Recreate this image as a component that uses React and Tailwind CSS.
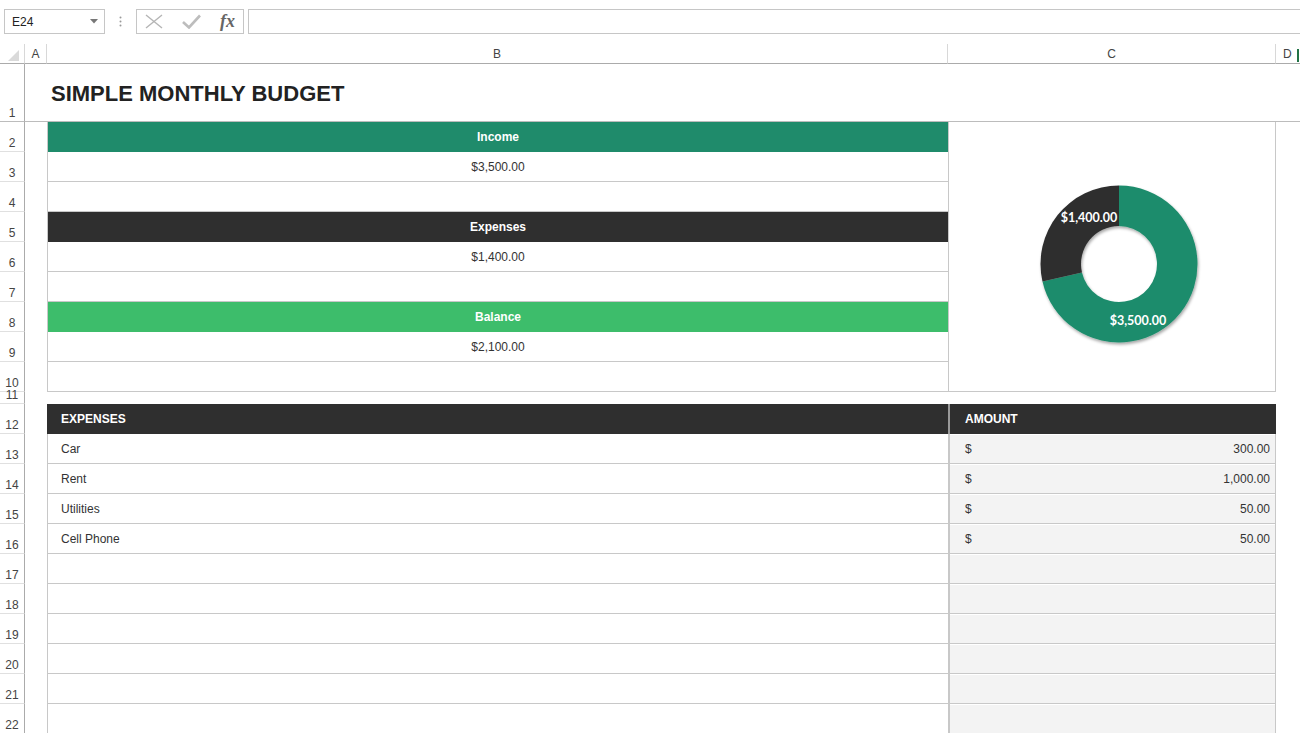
import React from "react";

const topRows = [
  { n: 2, text: "Income", cls: "bg-[#1f8b6b] text-white font-bold" },
  { n: 3, text: "$3,500.00", cls: "border-b border-[#c8c8c8] text-[#333]" },
  { n: 4, text: "", cls: "border-b border-[#c8c8c8]" },
  { n: 5, text: "Expenses", cls: "bg-[#2f2f2f] text-white font-bold" },
  { n: 6, text: "$1,400.00", cls: "border-b border-[#c8c8c8] text-[#333]" },
  { n: 7, text: "", cls: "border-b border-[#c8c8c8]" },
  { n: 8, text: "Balance", cls: "bg-[#3dbd6b] text-white font-bold" },
  { n: 9, text: "$2,100.00", cls: "border-b border-[#c8c8c8] text-[#333]" },
  { n: 10, text: "", cls: "border-b border-[#c8c8c8]" },
];

const expenses = [
  { n: 13, name: "Car", amount: "300.00" },
  { n: 14, name: "Rent", amount: "1,000.00" },
  { n: 15, name: "Utilities", amount: "50.00" },
  { n: 16, name: "Cell Phone", amount: "50.00" },
  { n: 17 },
  { n: 18 },
  { n: 19 },
  { n: 20 },
  { n: 21 },
  { n: 22 },
];

// angle in degrees, clockwise from 12 o'clock
const polar = (cx, cy, r, deg) => {
  const a = ((deg - 90) * Math.PI) / 180;
  return [cx + r * Math.cos(a), cy + r * Math.sin(a)];
};

const slice = (cx, cy, r0, r1, a0, a1) => {
  const large = a1 - a0 > 180 ? 1 : 0;
  const [x1, y1] = polar(cx, cy, r1, a0);
  const [x2, y2] = polar(cx, cy, r1, a1);
  const [x3, y3] = polar(cx, cy, r0, a1);
  const [x4, y4] = polar(cx, cy, r0, a0);
  return `M${x1} ${y1} A${r1} ${r1} 0 ${large} 1 ${x2} ${y2} L${x3} ${y3} A${r0} ${r0} 0 ${large} 0 ${x4} ${y4} Z`;
};

const RowNum = ({ n, last = false }) => (
  <div
    className={`flex items-end justify-center pb-[1px] text-[12px] leading-[13px] text-[#444] border-r border-r-[#ababab] ${
      last ? "border-b border-b-[#bcbcbc]" : "border-b border-b-[#e0e0e0]"
    }`}
  >
    {n}
  </div>
);

const Donut = () => {
  const cx = 170;
  const cy = 142;
  const split = (3500 / 4900) * 360;
  return (
    <svg width="328" height="269" viewBox="0 0 328 269" className="block">
      <defs>
        <filter id="shadow" x="-20%" y="-20%" width="140%" height="140%">
          <feDropShadow dx="1" dy="2" stdDeviation="1.6" floodColor="#000" floodOpacity="0.35" />
        </filter>
      </defs>
      <g filter="url(#shadow)">
        <path d={slice(cx, cy, 38, 78.5, 0, split)} fill="#1e8c6c" />
        <path d={slice(cx, cy, 38, 78.5, split, 360)} fill="#2f2f2f" />
      </g>
      <text
        x="140"
        y="95"
        textAnchor="middle"
        dominantBaseline="central"
        fill="#fff"
        fontSize="12.5"
        fontWeight="700"
        fontFamily="Lato, 'Open Sans', sans-serif"
      >
        $1,400.00
      </text>
      <text
        x="189"
        y="198"
        textAnchor="middle"
        dominantBaseline="central"
        fill="#fff"
        fontSize="12.5"
        fontWeight="700"
        fontFamily="Lato, 'Open Sans', sans-serif"
      >
        $3,500.00
      </text>
    </svg>
  );
};

const FormulaBar = () => (
  <div className="h-[44px] flex items-start pt-[9px] pl-[4px]">
    <div className="w-[101px] h-[25px] border border-[#c6c6c6] flex items-center justify-between pl-[7px] pr-[6px] text-[12px] text-[#222]">
      <span>E24</span>
      <svg width="8" height="5" viewBox="0 0 8 5">
        <path d="M0 0 L8 0 L4 4.5 Z" fill="#777" />
      </svg>
    </div>
    <div className="w-[31px] h-[25px] flex items-center justify-center">
      <svg width="3" height="11" viewBox="0 0 3 11">
        <circle cx="1.5" cy="1.5" r="1" fill="#999" />
        <circle cx="1.5" cy="5.5" r="1" fill="#999" />
        <circle cx="1.5" cy="9.5" r="1" fill="#999" />
      </svg>
    </div>
    <div className="w-[108px] h-[25px] border border-[#c6c6c6] flex items-center pl-[8px] gap-[19px]">
      <svg width="18" height="15" viewBox="0 0 18 15">
        <path d="M1 1 L17 14 M17 1 L1 14" stroke="#b5b5b5" strokeWidth="1.4" fill="none" />
      </svg>
      <svg width="19" height="15" viewBox="0 0 19 15">
        <path d="M1 8 L7 13.5 L18 1.5" stroke="#bdbdbd" strokeWidth="2.6" fill="none" />
      </svg>
      <span className="font-['Liberation_Serif',serif] italic font-bold text-[18px] leading-none text-[#666] -mt-[2px]">
        fx
      </span>
    </div>
    <div className="ml-[4px] flex-1 h-[25px] border border-[#c6c6c6] border-r-0" />
  </div>
);

export default function App() {
  return (
    <div className="w-[1300px] h-[733px] overflow-hidden bg-white font-['Liberation_Sans',Arial,sans-serif]">
      <FormulaBar />
      <div className="grid grid-cols-[25px_22px_901px_328px_1fr] grid-rows-[20px_58px_repeat(9,30px)_12px_repeat(11,30px)]">
        {/* column headers */}
        <div className="border-b border-[#ababab] border-r border-r-[#d8d8d8] flex items-end justify-center pb-[2px]">
          <svg width="11" height="11" viewBox="0 0 11 11" className="ml-[3px]">
            <path d="M11 0 L11 11 L0 11 Z" fill="#dadada" />
          </svg>
        </div>
        <div className="border-b border-[#ababab] border-r border-r-[#d8d8d8] flex items-center justify-center text-[12px] text-[#444]">
          A
        </div>
        <div className="border-b border-[#ababab] border-r border-r-[#d8d8d8] flex items-center justify-center text-[12px] text-[#444]">
          B
        </div>
        <div className="border-b border-[#ababab] border-r border-r-[#d8d8d8] flex items-center justify-center text-[12px] text-[#444]">
          C
        </div>
        <div className="border-b border-[#ababab] flex items-center text-[12px] text-[#444] pl-[7px]">
          <span>D</span>
          <span className="ml-[5px] w-[2px] h-[13px] mt-[4px] bg-[#217346]" />
        </div>

        {/* row 1 */}
        <RowNum n={1} last />
        <div className="border-b border-[#bcbcbc]" />
        <div className="border-b border-[#bcbcbc] flex items-center pl-[4px] pt-[2px]">
          <h1 className="text-[22px] leading-none font-bold text-[#222]">SIMPLE MONTHLY BUDGET</h1>
        </div>
        <div className="border-b border-[#bcbcbc]" />
        <div className="border-b border-[#bcbcbc]" />

        {/* rows 2-10: summary + chart */}
        {topRows.map((row) => (
          <React.Fragment key={row.n}>
            <RowNum n={row.n} />
            <div />
            <div className={`border-l border-l-[#c8c8c8] flex items-center justify-center text-[12px] ${row.cls}`}>
              {row.text}
            </div>
            {row.n === 2 && (
              <div className="row-span-9 border-l border-r border-b border-[#c8c8c8] overflow-hidden">
                <Donut />
              </div>
            )}
            <div />
          </React.Fragment>
        ))}

        {/* row 11 spacer */}
        <RowNum n={11} />
        <div />
        <div />
        <div />
        <div />

        {/* row 12 header */}
        <RowNum n={12} />
        <div />
        <div className="bg-[#2f2f2f] flex items-center pl-[14px] text-[12px] font-bold text-white">EXPENSES</div>
        <div className="bg-[#2f2f2f] border-l-2 border-l-[#9a9a9a] flex items-center pl-[15px] text-[12px] font-bold text-white">
          AMOUNT
        </div>
        <div />

        {/* rows 13-22 */}
        {expenses.map((e) => (
          <React.Fragment key={e.n}>
            <RowNum n={e.n} />
            <div />
            <div className="border-l border-b border-[#c8c8c8] flex items-center pl-[13px] text-[12px] text-[#333]">
              {e.name}
            </div>
            <div className="bg-[#f3f3f3] border-l-2 border-r border-b border-[#c8c8c8] shadow-[inset_0_1px_0_#fff] flex items-center justify-between pl-[15px] pr-[5px] text-[12px] text-[#333]">
              <span>{e.name ? "$" : ""}</span>
              <span>{e.amount}</span>
            </div>
            <div />
          </React.Fragment>
        ))}
      </div>
    </div>
  );
}
